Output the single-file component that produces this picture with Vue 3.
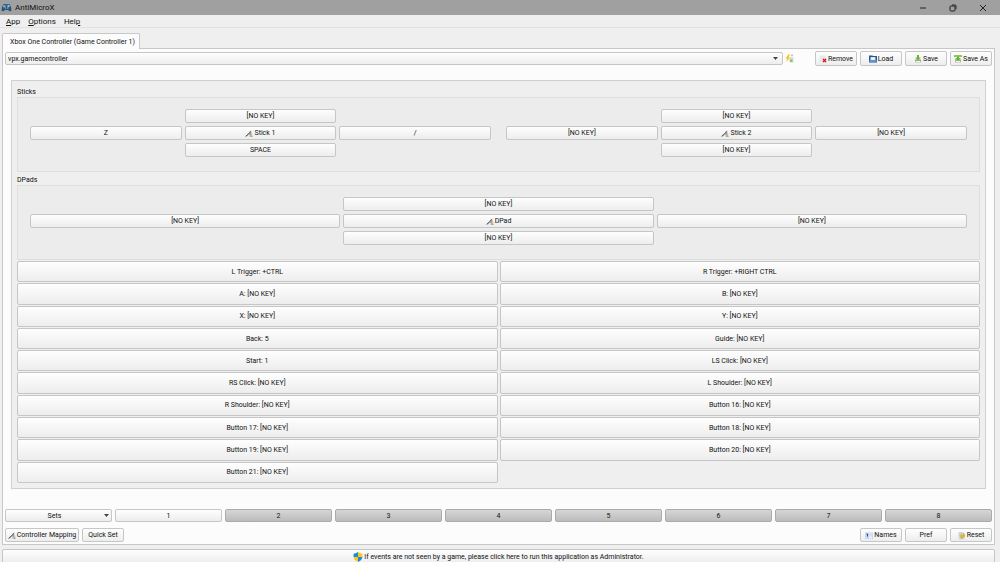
<script setup>
import { ref } from 'vue'

const profile = ref('vpx.gamecontroller')
const activeSet = ref(1)
const sticks = [
  { name: 'Stick 1', up: '[NO KEY]', left: 'Z', right: '/', down: 'SPACE' },
  { name: 'Stick 2', up: '[NO KEY]', left: '[NO KEY]', right: '[NO KEY]', down: '[NO KEY]' },
]
const dpads = [
  { name: 'DPad', up: '[NO KEY]', left: '[NO KEY]', right: '[NO KEY]', down: '[NO KEY]' },
]
const groups = [
  { title: 'Sticks', items: sticks },
  { title: 'DPads', items: dpads },
]
const buttons = [
  'L Trigger: +CTRL', 'R Trigger: +RIGHT CTRL',
  'A: [NO KEY]', 'B: [NO KEY]',
  'X: [NO KEY]', 'Y: [NO KEY]',
  'Back: 5', 'Guide: [NO KEY]',
  'Start: 1', 'LS Click: [NO KEY]',
  'RS Click: [NO KEY]', 'L Shoulder: [NO KEY]',
  'R Shoulder: [NO KEY]', 'Button 16: [NO KEY]',
  'Button 17: [NO KEY]', 'Button 18: [NO KEY]',
  'Button 19: [NO KEY]', 'Button 20: [NO KEY]',
  'Button 21: [NO KEY]',
]
</script>

<template>
  <div class="window">
    <svg class="defs" aria-hidden="true">
      <symbol id="tool" viewBox="0 0 16 16">
        <path d="M8 7h7v7H8z" fill="#d4d4d4" />
        <path d="M1 12L7 7l3-5 3-1-1 4 2 1-3 2-2-1-5 6z" fill="#999" />
        <path d="M1 13l10-9" stroke="#444" stroke-width="1.500" />
        <path d="M9 9c2-1 5 0 3 2s0 2 3 2" fill="none" stroke="#7c9460" stroke-width="1.500" />
      </symbol>
    </svg>

    <header class="titlebar">
      <svg class="logo" viewBox="0 0 22 18">
        <path d="M5 2h4l2 1 2-1h4l3 6 1 7-3 2-4-3H8l-4 3-3-2 1-7z" fill="#28577c" />
        <circle cx="6.500" cy="6.500" r="2.500" fill="#79b6d8" />
        <circle cx="15" cy="6" r="2.500" fill="#8cc0dc" />
        <circle cx="9" cy="10" r="1.500" fill="#b9a5ab" />
        <circle cx="13.500" cy="10" r="1.500" fill="#b9a5ab" />
      </svg>
      <h1>AntiMicroX</h1>
      <div class="controls">
        <button type="button" aria-label="Minimize"><svg viewBox="0 0 8 8"><path d="M1 4h6" /></svg></button>
        <button type="button" aria-label="Restore"><svg viewBox="0 0 8 8"><path d="M1 3q0-1 1-1h3q1 0 1 1v3q0 1-1 1H2q-1 0-1-1zM3 1h3q1 0 1 1v3" /></svg></button>
        <button type="button" aria-label="Close"><svg viewBox="0 0 8 8"><path d="M1 1l6 6M7 1L1 7" /></svg></button>
      </div>
    </header>

    <nav class="menubar">
      <button type="button"><u>A</u>pp</button>
      <button type="button"><u>O</u>ptions</button>
      <button type="button">Hel<u>p</u></button>
    </nav>

    <div class="tabs"><button type="button" class="tab">Xbox One Controller (Game Controller 1)</button></div>

    <main class="panel">
      <div class="profile">
        <div class="combo">
          <select v-model="profile" aria-label="Profile"><option>vpx.gamecontroller</option></select>
          <i class="arrow"></i>
        </div>
        <svg class="bolt" viewBox="0 0 16 16">
          <path d="M8 6h7v9H8z" fill="#d2d9d0" /><path d="M11 1h3v3h-3z" fill="#b9b9b9" />
          <path d="M9 10h4v4H9z" fill="#83c653" />
          <path d="M6 1L1 8h3l-2 6 7-8H6l3-5z" fill="#f5c211" />
        </svg>
        <div class="files">
          <button type="button" class="btn">
            <svg class="icon" viewBox="0 0 16 16"><path d="M1 1h13v13H1z" fill="#e6eaee" /><path d="M7 6h8v9H7z" fill="#f5d8d8" /><path d="M8 8l6 6M14 8l-6 6" stroke="#d01818" stroke-width="2.500" /></svg>Remove
          </button>
          <button type="button" class="btn">
            <svg class="icon" viewBox="0 0 16 16"><path d="M0 1h7l1 1h8v13H0z" fill="#28568f" /><path d="M3 4h10v7H3z" fill="#cfe1f3" /><path d="M5 6h6v3H5z" fill="#fff" /><path d="M1 10h14v4H1z" fill="#5e93cc" /></svg>Load
          </button>
          <button type="button" class="btn">
            <svg class="icon" viewBox="0 0 16 16"><path d="M2 10h12v5H2z" fill="#bdbdbd" /><path d="M4 12h8v2H4z" fill="#f5f5f5" /><path d="M6 0h4v5h4l-6 5-6-5h4z" fill="#62b928" /><path d="M2 10h12" stroke="#559a2c" stroke-width="1.500" /></svg>Save
          </button>
          <button type="button" class="btn">
            <svg class="icon" viewBox="0 0 16 16"><path d="M2 10h12v5H2z" fill="#bdbdbd" /><path d="M4 12h8v2H4z" fill="#f5f5f5" /><path d="M0 0h16v4H0z" fill="#8bc857" /><path d="M6 3h4v3h4l-6 5-6-5h4z" fill="#62b928" /><path d="M2 10h12" stroke="#559a2c" stroke-width="1.500" /></svg>Save As
          </button>
        </div>
      </div>

      <section class="mapping">
        <template v-for="g in groups" :key="g.title">
          <h2>{{ g.title }}</h2>
          <div class="group">
            <div v-for="s in g.items" :key="s.name" class="cross">
              <button type="button" class="btn up">{{ s.up }}</button>
              <button type="button" class="btn left">{{ s.left }}</button>
              <button type="button" class="btn mid"><svg class="icon"><use href="#tool" /></svg>{{ s.name }}</button>
              <button type="button" class="btn right">{{ s.right }}</button>
              <button type="button" class="btn down">{{ s.down }}</button>
            </div>
          </div>
        </template>
        <div class="keys">
          <button v-for="b in buttons" :key="b" type="button" class="btn">{{ b }}</button>
        </div>
      </section>

      <div class="sets">
        <button type="button" class="btn menu">Sets<i class="arrow"></i></button>
        <button
          v-for="n in 8" :key="n" type="button" class="btn"
          :class="{ dark: n !== activeSet }" @click="activeSet = n"
        >{{ n }}</button>
      </div>

      <div class="actions">
        <button type="button" class="btn wide"><svg class="icon"><use href="#tool" /></svg>Controller Mapping</button>
        <button type="button" class="btn">Quick Set</button>
        <span class="spacer"></span>
        <button type="button" class="btn">
          <svg class="icon" viewBox="0 0 16 16"><path d="M0 1h16v13H0z" fill="#c5d9f3" /><path d="M8 3h6v10H8z" fill="#eef3fa" /><path d="M3 4h2v5" fill="none" stroke="#274a85" stroke-width="2" /><path d="M9 5h4M9 8h4" stroke="#a0aab8" /></svg>Names
        </button>
        <button type="button" class="btn">Pref</button>
        <button type="button" class="btn">
          <svg class="icon" viewBox="0 0 16 16"><path d="M1 0h9l3 3v12H1z" fill="#d5d8dc" /><path d="M3 4h6M3 7h4" stroke="#9ba0a7" /><path d="M4 10l4-4v2c3-1 3-4 2-5 5 1 6 8-2 9v2z" fill="#e3bd18" stroke="#a78a18" stroke-width=".5" /></svg>Reset
        </button>
      </div>
    </main>

    <footer class="status">
      <button type="button" class="btn">
        <svg class="shield" viewBox="0 0 18 18">
          <path d="M9 0Q5 3 1 3v6h8z" fill="#1b8ae0" /><path d="M9 0q4 3 8 3v6H9z" fill="#fcca16" />
          <path d="M1 9q1 6 8 9V9z" fill="#fcca16" /><path d="M17 9q-1 6-8 9V9z" fill="#1b8ae0" />
        </svg>If events are not seen by a game, please click here to run this application as Administrator.
      </button>
    </footer>
  </div>
</template>

<style>
body { margin: 0; }
</style>

<style scoped>
* { box-sizing: border-box; }
.window {
  height: 100vh;
  display: flex;
  flex-direction: column;
  overflow: hidden;
  background: #efefef;
  color: #111;
  font: 7px/11px Roboto, "Noto Sans", sans-serif;
}
.defs { position: absolute; width: 0; height: 0; }
button, select { font: inherit; color: inherit; margin: 0; padding: 0; border: 0; background: none; }
h1, h2 { margin: 0; font: inherit; }

.titlebar {
  flex: none;
  height: 15px;
  display: flex;
  align-items: center;
  padding-left: 1px;
  background: #a0a0a0;
}
.titlebar h1 { flex: 1; font-size: 8px; line-height: 15px; }
.logo { width: 11px; height: 9px; margin-right: 3px; }
.controls { display: flex; margin-right: 2px; }
.controls button { width: 30px; height: 15px; display: grid; place-items: center; }
.controls svg { width: 8px; height: 8px; fill: none; stroke: #222; stroke-width: 1; }

.menubar {
  flex: none;
  height: 13px;
  display: flex;
  gap: 8px;
  padding: 1px 0 0 6px;
  border-bottom: 1px solid #e2e2e2;
}
.menubar button { font-size: 8px; line-height: 11px; }
.menubar u { text-underline-offset: 1px; }

.tabs { flex: none; padding: 5px 0 0 2px; position: relative; z-index: 1; margin-bottom: -1px; }
.tab {
  display: block;
  height: 16px;
  padding: 2px 4px 0 7px;
  border: 1px solid #c8c8c8;
  border-bottom: 0;
  border-radius: 2px 2px 0 0;
  background: #fcfcfc;
}

.panel {
  flex: 1;
  display: flex;
  flex-direction: column;
  margin: 0 5px 0 2px;
  padding: 2px 2px 2px;
  border: 1px solid #c8c8c8;
  background: #fcfcfc;
}
.btn {
  display: flex;
  align-items: center;
  justify-content: center;
  min-width: 0;
  padding-top: 1px;
  border: 1px solid #c6c6c6;
  border-radius: 2px;
  background: linear-gradient(#fefefe, #ededed);
  white-space: nowrap;
}
.icon { width: 8px; height: 8px; flex: none; margin-right: 1px; }
.arrow {
  width: 5px;
  height: 3px;
  background: #444;
  clip-path: polygon(0 0, 100% 0, 50% 100%);
}

.profile { display: flex; align-items: center; height: 15px; }
.combo { flex: 1; height: 13px; position: relative; }
.combo select {
  appearance: none;
  display: block;
  width: 100%;
  height: 13px;
  padding: 1px 2px 0;
  border: 1px solid #c6c6c6;
  border-radius: 2px;
  background: linear-gradient(#fefefe, #ededed);
}
.combo .arrow { position: absolute; right: 5px; top: 5px; pointer-events: none; }
.bolt { width: 9px; height: 9px; margin: 0 21px 0 2px; }
.files { display: flex; gap: 3px; }
.files .btn { width: 42px; height: 15px; }

.mapping {
  margin: 14px 6px 0;
  padding: 4px 5px 5px;
  border: 1px solid #d0d0d0;
  background: #efefef;
}
.mapping h2 { height: 12px; line-height: 14px; }
.group {
  display: flex;
  gap: 15px;
  height: 75px;
  margin-bottom: 1px;
  padding: 11px 12px 0;
  border: 1px solid #dedede;
  background: #ececec;
}
.cross {
  flex: 1;
  display: grid;
  grid-template-columns: 1fr 1fr 1fr;
  grid-template-rows: repeat(3, 14px);
  gap: 3px;
  grid-template-areas: ". up ." "left mid right" ". down .";
}
.up { grid-area: up; }
.left { grid-area: left; }
.mid { grid-area: mid; }
.right { grid-area: right; }
.down { grid-area: down; }
.keys {
  display: grid;
  grid-template-columns: 1fr 1fr;
  grid-template-rows: repeat(10, 1fr);
  gap: 1px 2px;
  height: 222px;
}

.sets {
  display: grid;
  grid-template-columns: repeat(9, 1fr);
  gap: 3px;
  margin-top: auto;
}
.sets .btn { height: 13px; position: relative; }
.sets .dark { border-color: #ababab; background: linear-gradient(#d6d6d6, #bcbcbc); }
.sets .menu { padding-right: 8px; }
.menu .arrow { position: absolute; right: 2px; top: 4px; }

.actions { display: flex; gap: 3px; margin-top: 6px; }
.actions .btn { width: 42px; height: 14px; }
.actions .wide { width: 74px; }
.spacer { flex: 1; }

.status { flex: none; height: 17px; padding: 4px 5px 0 2px; }
.status .btn { width: 100%; height: 15px; }
.shield { width: 10px; height: 10px; margin-right: 1px; }
</style>
